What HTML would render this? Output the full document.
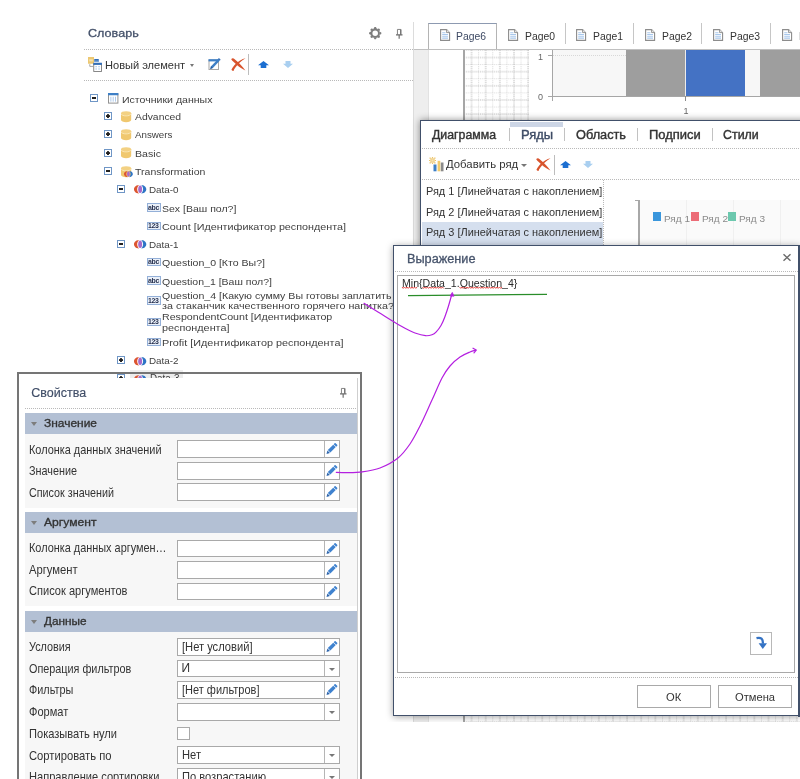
<!DOCTYPE html>
<html lang="ru"><head><meta charset="utf-8"><title>Словарь</title>
<style>
*{box-sizing:border-box;margin:0;padding:0}
html,body{width:800px;height:779px;overflow:hidden;background:#fff}
#w{position:absolute;left:0;top:0;width:800px;height:779px;will-change:transform;background:#fff}
body{position:relative;font-family:"Liberation Sans",Arial,sans-serif;font-size:11px;color:#333}
.t{position:absolute;white-space:nowrap;line-height:1;transform-origin:0 50%;color:#333}
.b{position:absolute}
svg{position:absolute;overflow:visible}
.dot{position:absolute;height:1px;background-image:linear-gradient(90deg,#b9b9b9 1px,transparent 1px);background-size:2px 1px}
.vdot{position:absolute;width:1px;background-image:linear-gradient(180deg,#b9b9b9 1px,transparent 1px);background-size:1px 2px}
.pm{position:absolute;width:8.200px;height:8.200px;border:1px solid #6f96c6;background:#fff}
.pm:before{content:"";position:absolute;left:1.200px;top:2.400px;width:3.900px;height:1.400px;background:#222}
.pm.p:before{left:1px;top:2.100px;width:4.200px;height:2px;border-radius:.6px;background:#222}
.pm.p:after{content:"";position:absolute;left:2.100px;top:1px;width:2px;height:4.200px;border-radius:.6px;background:#222}
.gh{position:absolute;left:25px;width:332.5px;height:20.5px;background:#b3c0d4}
.gh i{position:absolute;left:6.200px;top:8.600px;width:0;height:0;border-left:3.400px solid transparent;border-right:3.400px solid transparent;border-top:4.200px solid #7d7d7d}
.ra{position:absolute;left:25px;width:332.5px;background:#f7f7f7}
.in{position:absolute;left:176.800px;width:163px;height:17.5px;border:1px solid #a9a9a9;background:#fff}
.in:after{content:"";position:absolute;right:14.300px;top:0;bottom:0;width:1px;background:#b5b5b5}
.in.dd:before{content:"";position:absolute;right:4px;top:7px;border-left:3px solid transparent;border-right:3px solid transparent;border-top:3px solid #777}
.btn{position:absolute;border:1px solid #a9a9a9;background:#fff}
</style></head><body><div id="w">
<!-- dictionary -->
<span class="t" style="left:88.00px;top:28.21px;font-size:11.8px;color:#44516a;transform:scaleX(1.0682);-webkit-text-stroke:.3px #44516a;">Словарь</span>
<svg style="left:368.800px;top:27.300px" width="12.400" height="12.400" viewBox="-6.200 -6.200 12.400 12.400"><circle r="3.650" fill="none" stroke="#7d7d7d" stroke-width="1.750"/><g fill="#7d7d7d"><path d="M-1.800 -4.100L-.7 -6.100h1.400L1.800 -4.100z" transform="rotate(0)"/><path d="M-1.800 -4.100L-.7 -6.100h1.400L1.800 -4.100z" transform="rotate(45)"/><path d="M-1.800 -4.100L-.7 -6.100h1.400L1.800 -4.100z" transform="rotate(90)"/><path d="M-1.800 -4.100L-.7 -6.100h1.400L1.800 -4.100z" transform="rotate(135)"/><path d="M-1.800 -4.100L-.7 -6.100h1.400L1.800 -4.100z" transform="rotate(180)"/><path d="M-1.800 -4.100L-.7 -6.100h1.400L1.800 -4.100z" transform="rotate(225)"/><path d="M-1.800 -4.100L-.7 -6.100h1.400L1.800 -4.100z" transform="rotate(270)"/><path d="M-1.800 -4.100L-.7 -6.100h1.400L1.800 -4.100z" transform="rotate(315)"/></g></svg>
<svg style="left:396.250px;top:29px" width="6.500" height="9.700" viewBox="0 0 6.500 9.700"><path d="M1.450 5.600V.45h3.400V5.600" fill="none" stroke="#777" stroke-width=".9"/><rect x="4" y=".45" width="1.300" height="5.200" fill="#777"/><path d="M0 5.950h6.500M3.150 6.300v3.400" fill="none" stroke="#6a6a6a" stroke-width="1.150"/></svg>
<div class="dot" style="left:84px;top:49px;width:329px"></div>
<svg style="left:88px;top:56px" width="16" height="16" viewBox="0 0 16 16"><rect x="0" y="1" width="6" height="6.750" fill="#ecc873"/><path d="M1.200 3.200h3.600v2.200H1.200z" fill="#f5e1ad"/><rect x="6.250" y="3" width="4.500" height="2.750" fill="#2f6db9"/><rect x="6.250" y="4.600" width="4.500" height="1.150" fill="#7fa7d8"/><path d="M1.800 8.200v2.200h3.400" fill="none" stroke="#a5a5a5" stroke-width="1"/><rect x="5.750" y="8" width="7.700" height="7.500" fill="#fff" stroke="#7c7c7c" stroke-width=".9"/><rect x="5.250" y="6.750" width="8.700" height="2.100" fill="#2f6db9"/><path d="M7.300 10.200h1.700v1h-1.700zM10.200 10.200h1.700v1h-1.700zM7.300 12.400h1.700v1h-1.700zM10.200 12.400h1.700v1h-1.700z" fill="#a9c7eb"/></svg>
<span class="t" style="left:105.25px;top:59.82px;font-size:11.2px;transform:scaleX(0.9888);">Новый элемент</span>
<div class="b" style="left:189.800px;top:63.500px;width:0;height:0;border-left:2.900px solid transparent;border-right:2.900px solid transparent;border-top:3px solid #777"></div>
<svg style="left:207.500px;top:58px" width="13" height="13" viewBox="0 0 13 13"><rect x="1" y="2" width="9.500" height="9.500" fill="#fff" stroke="#a8a8a8" stroke-width="1"/><rect x=".5" y="1.200" width="10.500" height="2.200" fill="#3d7fc6"/><path d="M2.200 10.900l.9-2.700 7-7.300 1.800 1.700-7 7.300z" fill="#3d7fc6"/><path d="M2.200 10.900l.9-2.700 1.800 1.700z" fill="#2a5c9c"/><path d="M10.100.9l.8-.8 1.800 1.700-.8.800z" fill="#2f6ab5"/></svg>
<svg style="left:231px;top:58px" width="15" height="13" viewBox="0 0 15 13"><path d="M.2 1.300C.9.100 2.300 0 3.400.9 7.300 4 11.200 8 14.400 12.500 11.200 10.900 8.600 9.200 6.200 7.200 3.700 5.100 1.500 3.100.2 1.300z" fill="#d8542d"/><path d="M14.500.200C10.400 2.600 6.900 6 4.200 9.800 3.400 10.900 2.900 11.900 2.500 12.900 1.500 13 .6 12.500.5 11.500 1.900 8.300 5 4.900 9.100 2.400 10.900 1.300 12.800.500 14.500.200z" fill="#d8542d"/></svg>
<div class="b" style="left:248px;top:54px;width:1px;height:21px;background:#bdbdbd"></div>
<svg style="left:257.500px;top:61px" width="11" height="7" viewBox="0 0 11 7"><path d="M5.500 0L11 4.300H8.300V7H2.700V4.300H0z" fill="#1c6fd1"/></svg>
<svg style="left:282.500px;top:61px" width="10" height="7" viewBox="0 0 10 7"><path d="M5 7L10 2.700H7.500V0H2.500V2.700H0z" fill="#a9cff0"/></svg>
<div class="dot" style="left:84px;top:80px;width:329px"></div>
<div class="pm" style="left:90px;top:94px"></div>
<svg style="left:107.800px;top:93.100px" width="10.400" height="10.600" viewBox="0 0 10.800 10.800" preserveAspectRatio="none"><rect x=".5" y="1" width="9.800" height="9.300" fill="#fff" stroke="#8f8f8f"/><rect x="0" y="0" width="10.800" height="2.300" fill="#3d7fc6"/><path d="M3 3.800v5M5.400 3.800v5M7.800 3.800v5" stroke="#a9c6e8" stroke-width="1"/></svg>
<span class="t" style="left:122.15px;top:94.60px;font-size:9.8px;color:#404040;transform:scaleX(1.0778);">Источники данных</span>
<div class="pm p" style="left:104px;top:112px"></div>
<svg style="left:120.9px;top:110.6px" width="10.200" height="11.200" viewBox="0 0 10.600 10.800" preserveAspectRatio="none"><path d="M0 2.200v6.600c0 1.100 2.400 2 5.300 2s5.300-.9 5.300-2V2.200z" fill="#f0c86f"/><ellipse cx="5.300" cy="2.200" rx="5.300" ry="2" fill="#f3d183"/><path d="M.2 3c.6 1 2.600 1.700 5.100 1.700S9.800 4 10.400 3" fill="none" stroke="#fbecc4" stroke-width=".8"/></svg>
<span class="t" style="left:134.90px;top:112.22px;font-size:9.9px;color:#404040;transform:scaleX(1.0504);">Advanced</span>
<div class="pm p" style="left:104px;top:130px"></div>
<svg style="left:120.9px;top:128.6px" width="10.200" height="11.200" viewBox="0 0 10.600 10.800" preserveAspectRatio="none"><path d="M0 2.200v6.600c0 1.100 2.400 2 5.300 2s5.300-.9 5.300-2V2.200z" fill="#f0c86f"/><ellipse cx="5.300" cy="2.200" rx="5.300" ry="2" fill="#f3d183"/><path d="M.2 3c.6 1 2.600 1.700 5.100 1.700S9.800 4 10.400 3" fill="none" stroke="#fbecc4" stroke-width=".8"/></svg>
<span class="t" style="left:134.90px;top:130.22px;font-size:9.9px;color:#404040;transform:scaleX(0.9879);">Answers</span>
<div class="pm p" style="left:104px;top:148.5px"></div>
<svg style="left:120.9px;top:147.1px" width="10.200" height="11.200" viewBox="0 0 10.600 10.800" preserveAspectRatio="none"><path d="M0 2.200v6.600c0 1.100 2.400 2 5.300 2s5.300-.9 5.300-2V2.200z" fill="#f0c86f"/><ellipse cx="5.300" cy="2.200" rx="5.300" ry="2" fill="#f3d183"/><path d="M.2 3c.6 1 2.600 1.700 5.100 1.700S9.800 4 10.400 3" fill="none" stroke="#fbecc4" stroke-width=".8"/></svg>
<span class="t" style="left:134.90px;top:148.72px;font-size:9.9px;color:#404040;transform:scaleX(1.0740);">Basic</span>
<div class="pm" style="left:104px;top:167px"></div>
<svg style="left:120.9px;top:165.6px" width="10.200" height="11.200" viewBox="0 0 10.600 10.800" preserveAspectRatio="none"><path d="M0 2.200v6.600c0 1.100 2.400 2 5.300 2s5.300-.9 5.300-2V2.200z" fill="#f0c86f"/><ellipse cx="5.300" cy="2.200" rx="5.300" ry="2" fill="#f3d183"/><path d="M.2 3c.6 1 2.600 1.700 5.100 1.700S9.800 4 10.400 3" fill="none" stroke="#fbecc4" stroke-width=".8"/></svg>
<span class="t" style="left:134.90px;top:167.22px;font-size:9.9px;color:#404040;transform:scaleX(1.0649);">Transformation</span>
<svg style="left:124.4px;top:171px" width="8.86" height="6.19" viewBox="0 0 12.300 8.600"><path d="M5.100 0C.9.300 0 3 0 4.300S.9 8.300 5.100 8.600C3.600 7.200 3.200 5.600 3.200 4.300S3.600 1.400 5.100 0z" fill="#dc5530"/><ellipse cx="6.150" cy="4.300" rx="1.950" ry="3.800" fill="#a66acb"/><path d="M7.200 0C11.400.300 12.300 3 12.300 4.300S11.400 8.300 7.200 8.600C8.700 7.200 9.100 5.600 9.100 4.300S8.700 1.400 7.200 0z" fill="#2d74c6"/></svg>
<div class="pm" style="left:117px;top:185px"></div>
<svg style="left:133.9px;top:185.4px" width="12.30" height="8.60" viewBox="0 0 12.300 8.600"><path d="M5.100 0C.9.300 0 3 0 4.300S.9 8.300 5.100 8.600C3.600 7.200 3.200 5.600 3.200 4.300S3.600 1.400 5.100 0z" fill="#dc5530"/><ellipse cx="6.150" cy="4.300" rx="1.950" ry="3.800" fill="#a66acb"/><path d="M7.200 0C11.400.300 12.300 3 12.300 4.300S11.400 8.300 7.200 8.600C8.700 7.200 9.100 5.600 9.100 4.300S8.700 1.400 7.200 0z" fill="#2d74c6"/></svg>
<span class="t" style="left:149.15px;top:185.40px;font-size:9.8px;color:#404040;transform:scaleX(1.0064);">Data-0</span>
<div class="b" style="left:147px;top:203.10px;width:13.800px;height:8.500px;border:1px solid #94b0d8;background:#eaf0f9"></div><span class="t" style="left:148.20px;top:203.60px;font-size:7.500px;font-weight:bold;color:#27314f;letter-spacing:-0.300px;transform:scaleX(.92)">abc</span>
<span class="t" style="left:161.90px;top:203.70px;font-size:9.8px;color:#404040;transform:scaleX(1.0731);">Sex [Ваш пол?]</span>
<div class="b" style="left:147px;top:221.60px;width:13.800px;height:8.500px;border:1px solid #94b0d8;background:#eaf0f9"></div><span class="t" style="left:148.20px;top:222.10px;font-size:7.500px;font-weight:bold;color:#27314f;letter-spacing:-0.300px;transform:scaleX(.92)">123</span>
<span class="t" style="left:161.90px;top:222.40px;font-size:9.8px;color:#404040;transform:scaleX(1.0982);">Count [Идентификатор респондента]</span>
<div class="pm" style="left:117px;top:239.8px"></div>
<svg style="left:133.9px;top:240.20000000000002px" width="12.30" height="8.60" viewBox="0 0 12.300 8.600"><path d="M5.100 0C.9.300 0 3 0 4.300S.9 8.300 5.100 8.600C3.600 7.200 3.200 5.600 3.200 4.300S3.600 1.400 5.100 0z" fill="#dc5530"/><ellipse cx="6.150" cy="4.300" rx="1.950" ry="3.800" fill="#a66acb"/><path d="M7.200 0C11.400.300 12.300 3 12.300 4.300S11.400 8.300 7.200 8.600C8.700 7.200 9.100 5.600 9.100 4.300S8.700 1.400 7.200 0z" fill="#2d74c6"/></svg>
<span class="t" style="left:149.15px;top:240.20px;font-size:9.8px;color:#404040;transform:scaleX(1.0064);">Data-1</span>
<div class="b" style="left:147px;top:257.60px;width:13.800px;height:8.500px;border:1px solid #94b0d8;background:#eaf0f9"></div><span class="t" style="left:148.20px;top:258.10px;font-size:7.500px;font-weight:bold;color:#27314f;letter-spacing:-0.300px;transform:scaleX(.92)">abc</span>
<span class="t" style="left:161.90px;top:258.40px;font-size:9.8px;color:#404040;transform:scaleX(1.0777);">Question_0 [Кто Вы?]</span>
<div class="b" style="left:147px;top:276.10px;width:13.800px;height:8.500px;border:1px solid #94b0d8;background:#eaf0f9"></div><span class="t" style="left:148.20px;top:276.60px;font-size:7.500px;font-weight:bold;color:#27314f;letter-spacing:-0.300px;transform:scaleX(.92)">abc</span>
<span class="t" style="left:161.90px;top:276.60px;font-size:9.8px;color:#404040;transform:scaleX(1.0725);">Question_1 [Ваш пол?]</span>
<div class="b" style="left:147px;top:296.10px;width:13.800px;height:8.500px;border:1px solid #94b0d8;background:#eaf0f9"></div><span class="t" style="left:148.20px;top:296.60px;font-size:7.500px;font-weight:bold;color:#27314f;letter-spacing:-0.300px;transform:scaleX(.92)">123</span>
<span class="t" style="left:161.90px;top:291.73px;font-size:9.3px;color:#404040;transform:scaleX(1.1384);">Question_4 [Какую сумму Вы готовы заплатить</span>
<span class="t" style="left:161.90px;top:301.73px;font-size:9.3px;color:#404040;transform:scaleX(1.1562);">за стаканчик качественного горячего напитка?</span>
<div class="b" style="left:147px;top:317.60px;width:13.800px;height:8.500px;border:1px solid #94b0d8;background:#eaf0f9"></div><span class="t" style="left:148.20px;top:318.10px;font-size:7.500px;font-weight:bold;color:#27314f;letter-spacing:-0.300px;transform:scaleX(.92)">123</span>
<span class="t" style="left:161.90px;top:313.23px;font-size:9.3px;color:#404040;transform:scaleX(1.1461);">RespondentCount [Идентификатор</span>
<span class="t" style="left:161.90px;top:323.93px;font-size:9.3px;color:#404040;transform:scaleX(1.1642);">респондента]</span>
<div class="b" style="left:147px;top:337.90px;width:13.800px;height:8.500px;border:1px solid #94b0d8;background:#eaf0f9"></div><span class="t" style="left:148.20px;top:338.40px;font-size:7.500px;font-weight:bold;color:#27314f;letter-spacing:-0.300px;transform:scaleX(.92)">123</span>
<span class="t" style="left:161.90px;top:338.83px;font-size:9.3px;color:#404040;transform:scaleX(1.1643);">Profit [Идентификатор респондента]</span>
<div class="pm p" style="left:117px;top:356.3px"></div>
<svg style="left:133.9px;top:356.7px" width="12.30" height="8.60" viewBox="0 0 12.300 8.600"><path d="M5.100 0C.9.300 0 3 0 4.300S.9 8.300 5.100 8.600C3.600 7.200 3.200 5.600 3.200 4.300S3.600 1.400 5.100 0z" fill="#dc5530"/><ellipse cx="6.150" cy="4.300" rx="1.950" ry="3.800" fill="#a66acb"/><path d="M7.200 0C11.400.300 12.300 3 12.300 4.300S11.400 8.300 7.200 8.600C8.700 7.200 9.100 5.600 9.100 4.300S8.700 1.400 7.200 0z" fill="#2d74c6"/></svg>
<span class="t" style="left:149.15px;top:355.70px;font-size:9.8px;color:#404040;transform:scaleX(1.0064);">Data-2</span>
<div class="b" style="left:130px;top:370px;width:52.500px;height:14px;background:#efefef"></div>
<div class="pm p" style="left:117px;top:374.3px"></div>
<svg style="left:133.9px;top:374.7px" width="12.30" height="8.60" viewBox="0 0 12.300 8.600"><path d="M5.100 0C.9.300 0 3 0 4.300S.9 8.300 5.100 8.600C3.600 7.200 3.200 5.600 3.200 4.300S3.600 1.400 5.100 0z" fill="#dc5530"/><ellipse cx="6.150" cy="4.300" rx="1.950" ry="3.800" fill="#a66acb"/><path d="M7.200 0C11.400.300 12.300 3 12.300 4.300S11.400 8.300 7.200 8.600C8.700 7.200 9.100 5.600 9.100 4.300S8.700 1.400 7.200 0z" fill="#2d74c6"/></svg>
<span class="t" style="left:149.15px;top:374.70px;font-size:9.8px;color:#404040;transform:scaleX(1.0064);">Data-3</span>
<!-- designer backdrop -->
<div class="b" style="left:413px;top:22px;width:1px;height:700px;background:#dcdcdc"></div>
<div class="b" style="left:414px;top:49.500px;width:14px;height:672.500px;background:#eeeeee"></div>
<svg style="left:464px;top:49.500px" width="336" height="672.500" viewBox="0 0 336 672.500"><defs><pattern id="gr" width="14.140" height="14.140" patternUnits="userSpaceOnUse"><path d="M0 .5H14.140M0 7.570H14.140" stroke="#c4c4c4" stroke-width="1" stroke-dasharray="1 .8" opacity=".55"/><path d="M0 7.570H14.140" stroke="#a8a8a8" stroke-width="1" stroke-dasharray="1 .8" opacity=".5"/><path d="M.5 0V14.140" stroke="#c4c4c4" stroke-width="1" stroke-dasharray="1 .8" opacity=".55"/><path d="M7.570 0V14.140" stroke="#a8a8a8" stroke-width="1" stroke-dasharray="1 .8" opacity=".8"/></pattern></defs><rect width="336" height="672.500" fill="#fff"/><rect x="0" y="0" width="336" height="672.500" fill="url(#gr)"/></svg>
<div class="b" style="left:463.400px;top:50px;width:1.200px;height:672px;background:#a6a6a6"></div>
<div class="b" style="left:428px;top:49.500px;width:1px;height:672.500px;background:#e2e2e2"></div>
<div class="b" style="left:529px;top:49.500px;width:271px;height:70.500px;background:#fff"></div>
<div class="b" style="left:553px;top:49.500px;width:247px;height:46.500px;background:#f7f7f7"></div>
<div class="dot" style="left:553px;top:55px;width:73px;opacity:.5"></div>
<div class="b" style="left:626.300px;top:49.500px;width:58.700px;height:46.700px;background:#9e9e9e"></div>
<div class="b" style="left:685px;top:49.500px;width:1.200px;height:46.700px;background:#ececec"></div>
<div class="b" style="left:686.200px;top:49.500px;width:58.800px;height:46.700px;background:#4472c4"></div>
<div class="b" style="left:760px;top:49.500px;width:40px;height:46.700px;background:#9e9e9e"></div>
<div class="b" style="left:552px;top:49.500px;width:1.200px;height:51px;background:#a6a6a6"></div>
<div class="b" style="left:548px;top:55px;width:4px;height:1px;background:#a6a6a6"></div>
<div class="b" style="left:548px;top:96.300px;width:252px;height:1.100px;background:#a6a6a6"></div>
<div class="b" style="left:685.200px;top:96px;width:1px;height:4.500px;background:#8a8a8a"></div>
<span class="t" style="left:538.00px;top:52.58px;font-size:9px;color:#666;">1</span>
<span class="t" style="left:538.00px;top:93.38px;font-size:9px;color:#666;">0</span>
<span class="t" style="left:683.50px;top:107.38px;font-size:9px;color:#666;">1</span>
<!-- page tabs -->
<div class="b" style="left:414px;top:0;width:386px;height:49px;background:#fff"></div>
<div class="b" style="left:428px;top:22.500px;width:69px;height:26.500px;border:1px solid #b4b4b4;border-top-color:#8d9ab1;border-bottom:0;background:#fff"></div>
<div class="b" style="left:413.500px;top:48.900px;width:386.500px;height:1.300px;background:#c0c0c0"></div>
<svg style="left:439.8px;top:28.800px" width="10.200" height="12" viewBox="0 0 10.200 12"><path d="M.6.600h6l3 3v7.800h-9z" fill="#fff" stroke="#8c8c8c" stroke-width="1.100"/><path d="M6.600.600v3h3" fill="#e8e8e8" stroke="#8c8c8c" stroke-width=".9"/><path d="M2.200 3.700h3.300M2.200 5.500h5.800M2.200 7.300h5.800M2.200 9.100h5.800" stroke="#a9c8ec" stroke-width="1.100"/></svg>
<span class="t" style="left:455.50px;top:30.63px;font-size:11.3px;color:#3e4a64;transform:scaleX(0.9182);">Page6</span>
<svg style="left:508.2px;top:28.800px" width="10.200" height="12" viewBox="0 0 10.200 12"><path d="M.6.600h6l3 3v7.800h-9z" fill="#fff" stroke="#8c8c8c" stroke-width="1.100"/><path d="M6.600.600v3h3" fill="#e8e8e8" stroke="#8c8c8c" stroke-width=".9"/><path d="M2.200 3.700h3.300M2.200 5.500h5.800M2.200 7.300h5.800M2.200 9.100h5.800" stroke="#a9c8ec" stroke-width="1.100"/></svg>
<span class="t" style="left:525.00px;top:30.63px;font-size:11.3px;color:#333;transform:scaleX(0.9182);">Page0</span>
<svg style="left:576.2px;top:28.800px" width="10.200" height="12" viewBox="0 0 10.200 12"><path d="M.6.600h6l3 3v7.800h-9z" fill="#fff" stroke="#8c8c8c" stroke-width="1.100"/><path d="M6.600.600v3h3" fill="#e8e8e8" stroke="#8c8c8c" stroke-width=".9"/><path d="M2.200 3.700h3.300M2.200 5.500h5.800M2.200 7.300h5.800M2.200 9.100h5.800" stroke="#a9c8ec" stroke-width="1.100"/></svg>
<span class="t" style="left:593.20px;top:30.63px;font-size:11.3px;color:#333;transform:scaleX(0.9182);">Page1</span>
<svg style="left:644.7px;top:28.800px" width="10.200" height="12" viewBox="0 0 10.200 12"><path d="M.6.600h6l3 3v7.800h-9z" fill="#fff" stroke="#8c8c8c" stroke-width="1.100"/><path d="M6.600.600v3h3" fill="#e8e8e8" stroke="#8c8c8c" stroke-width=".9"/><path d="M2.200 3.700h3.300M2.200 5.500h5.800M2.200 7.300h5.800M2.200 9.100h5.800" stroke="#a9c8ec" stroke-width="1.100"/></svg>
<span class="t" style="left:662.00px;top:30.63px;font-size:11.3px;color:#333;transform:scaleX(0.9182);">Page2</span>
<svg style="left:713.2px;top:28.800px" width="10.200" height="12" viewBox="0 0 10.200 12"><path d="M.6.600h6l3 3v7.800h-9z" fill="#fff" stroke="#8c8c8c" stroke-width="1.100"/><path d="M6.600.600v3h3" fill="#e8e8e8" stroke="#8c8c8c" stroke-width=".9"/><path d="M2.200 3.700h3.300M2.200 5.500h5.800M2.200 7.300h5.800M2.200 9.100h5.800" stroke="#a9c8ec" stroke-width="1.100"/></svg>
<span class="t" style="left:730.00px;top:30.63px;font-size:11.3px;color:#333;transform:scaleX(0.9182);">Page3</span>
<svg style="left:781.9px;top:28.800px" width="10.200" height="12" viewBox="0 0 10.200 12"><path d="M.6.600h6l3 3v7.800h-9z" fill="#fff" stroke="#8c8c8c" stroke-width="1.100"/><path d="M6.600.600v3h3" fill="#e8e8e8" stroke="#8c8c8c" stroke-width=".9"/><path d="M2.200 3.700h3.300M2.200 5.500h5.800M2.200 7.300h5.800M2.200 9.100h5.800" stroke="#a9c8ec" stroke-width="1.100"/></svg>
<span class="t" style="left:799.00px;top:30.63px;font-size:11.3px;color:#333;transform:scaleX(0.9182);">Page4</span>
<div class="b" style="left:565.3px;top:23px;width:1px;height:21px;background:#c6c6c6"></div>
<div class="b" style="left:633px;top:23px;width:1px;height:21px;background:#c6c6c6"></div>
<div class="b" style="left:701.2px;top:23px;width:1px;height:21px;background:#c6c6c6"></div>
<div class="b" style="left:770.3px;top:23px;width:1px;height:21px;background:#c6c6c6"></div>
<!-- chart editor -->
<div class="b" style="left:420px;top:119.500px;width:400px;height:140px;border:1.300px solid #41506a;background:#fff;box-shadow:0 0 7px rgba(0,0,0,.45)"></div>
<div class="b" style="left:510px;top:121.800px;width:53px;height:5px;background:#cdd6e6"></div>
<span class="t" style="left:432.00px;top:129.42px;font-size:12.5px;color:#333;transform:scaleX(0.9846);-webkit-text-stroke:.4px #333;">Диаграмма</span>
<span class="t" style="left:520.50px;top:129.22px;font-size:12.5px;color:#3e4c66;transform:scaleX(1.0328);-webkit-text-stroke:.4px #3e4c66;">Ряды</span>
<span class="t" style="left:576.00px;top:129.42px;font-size:12.5px;color:#333;transform:scaleX(1.0193);-webkit-text-stroke:.4px #333;">Область</span>
<span class="t" style="left:648.75px;top:129.42px;font-size:12.5px;color:#333;transform:scaleX(1.0363);-webkit-text-stroke:.4px #333;">Подписи</span>
<span class="t" style="left:723.00px;top:129.42px;font-size:12.5px;color:#333;transform:scaleX(0.9928);-webkit-text-stroke:.4px #333;">Стили</span>
<div class="b" style="left:508.5px;top:127.500px;width:1px;height:13px;background:#c2c2c2"></div>
<div class="b" style="left:564.3px;top:127.500px;width:1px;height:13px;background:#c2c2c2"></div>
<div class="b" style="left:637.3px;top:127.500px;width:1px;height:13px;background:#c2c2c2"></div>
<div class="b" style="left:712.3px;top:127.500px;width:1px;height:13px;background:#c2c2c2"></div>
<div class="dot" style="left:421.500px;top:148px;width:379px"></div>
<svg style="left:428.500px;top:156.500px" width="15" height="15" viewBox="0 0 15 15"><rect x="1.300" y="1.300" width="4.400" height="4.400" fill="#efcf86"/><path d="M.5.500h1.300v1.300H.5zM5.200.500h1.300v1.300H5.200zM.5 5.200h1.300v1.300H.5zM5.200 5.200h1.300v1.300H5.200zM2.900 0h1.200v1.200H2.900zM2.900 5.800h1.200V7H2.900zM0 2.900h1.200v1.200H0zM5.800 2.900H7v1.200H5.800z" fill="#ecc469"/><rect x="2.500" y="2.500" width="2" height="2" fill="#f6e3b3"/><rect x="4.500" y="7.500" width="3" height="6.800" fill="#3d7fc6"/><rect x="8.600" y="3.800" width="2.700" height="10.500" fill="#f1cb6e"/><rect x="11.800" y="5.500" width="2.700" height="8.800" fill="#8a8a8a"/></svg>
<span class="t" style="left:445.75px;top:159.01px;font-size:11.8px;transform:scaleX(0.9617);">Добавить ряд</span>
<div class="b" style="left:521.200px;top:163.700px;width:0;height:0;border-left:3.100px solid transparent;border-right:3.100px solid transparent;border-top:3.300px solid #777"></div>
<svg style="left:536px;top:157.500px" width="15" height="13" viewBox="0 0 15 13"><path d="M.2 1.300C.9.100 2.300 0 3.400.9 7.300 4 11.200 8 14.400 12.500 11.200 10.900 8.600 9.200 6.200 7.200 3.700 5.100 1.500 3.100.2 1.300z" fill="#d8542d"/><path d="M14.500.200C10.400 2.600 6.900 6 4.200 9.800 3.400 10.900 2.900 11.900 2.500 12.900 1.500 13 .6 12.500.5 11.500 1.900 8.300 5 4.900 9.100 2.400 10.900 1.300 12.800.500 14.500.200z" fill="#d8542d"/></svg>
<div class="b" style="left:554px;top:154.500px;width:1px;height:20px;background:#bdbdbd"></div>
<svg style="left:560px;top:160.500px" width="11" height="7" viewBox="0 0 11 7"><path d="M5.500 0L11 4.300H8.300V7H2.700V4.300H0z" fill="#1c6fd1"/></svg>
<svg style="left:582.500px;top:160.500px" width="10" height="7" viewBox="0 0 10 7"><path d="M5 7L10 2.700H7.500V0H2.500V2.700H0z" fill="#a9cff0"/></svg>
<div class="dot" style="left:421.500px;top:179px;width:379px"></div>
<div class="vdot" style="left:602.500px;top:180px;width:1px;height:66px"></div>
<div class="b" style="left:421.500px;top:222px;width:181px;height:23px;background:#d5dfee"></div>
<span class="t" style="left:426.00px;top:185.91px;font-size:11.8px;color:#333;transform:scaleX(0.9275);">Ряд 1 [Линейчатая с накоплением]</span>
<span class="t" style="left:426.00px;top:207.01px;font-size:11.8px;color:#333;transform:scaleX(0.9275);">Ряд 2 [Линейчатая с накоплением]</span>
<span class="t" style="left:426.00px;top:227.21px;font-size:11.8px;color:#333;transform:scaleX(0.9275);">Ряд 3 [Линейчатая с накоплением]</span>
<div class="b" style="left:640px;top:200px;width:160px;height:46px;background:#fafafa"></div>
<div class="b" style="left:686px;top:200px;width:1px;height:46px;background:#f0f0f0"></div>
<div class="b" style="left:733px;top:200px;width:1px;height:46px;background:#f0f0f0"></div>
<div class="b" style="left:780.3px;top:200px;width:1px;height:46px;background:#f0f0f0"></div>
<div class="b" style="left:638.300px;top:200px;width:1.300px;height:46px;background:#a8a8a8"></div>
<div class="b" style="left:635px;top:200px;width:4px;height:1px;background:#a8a8a8"></div>
<div class="b" style="left:652.5px;top:212px;width:8.600px;height:8.600px;background:#3996dc"></div>
<div class="b" style="left:690.5px;top:212px;width:8.600px;height:8.600px;background:#ec6c77"></div>
<div class="b" style="left:727.6px;top:212px;width:8.600px;height:8.600px;background:#6cc8ae"></div>
<span class="t" style="left:663.70px;top:213.97px;font-size:9.6px;color:#8a8a8a;transform:scaleX(1.0452);">Ряд 1</span>
<span class="t" style="left:702.00px;top:213.97px;font-size:9.6px;color:#8a8a8a;transform:scaleX(1.0452);">Ряд 2</span>
<span class="t" style="left:739.00px;top:213.97px;font-size:9.6px;color:#8a8a8a;transform:scaleX(1.0452);">Ряд 3</span>
<!-- properties -->
<div class="b" style="left:17px;top:372px;width:345px;height:420px;background:#757575"></div>
<div class="b" style="left:19px;top:374px;width:341px;height:420px;background:#fff"></div>
<div class="b" style="left:117px;top:374px;width:66px;height:4.300px;overflow:hidden"><div class="b" style="left:13px;top:0;width:52.500px;height:5px;background:#ececec"></div><div class="pm p" style="left:0;top:0.300px"></div><svg style="left:17px;top:0.5px" width="12.30" height="8.60" viewBox="0 0 12.300 8.600"><path d="M5.100 0C.9.300 0 3 0 4.300S.9 8.300 5.100 8.600C3.600 7.200 3.200 5.600 3.200 4.300S3.600 1.400 5.100 0z" fill="#dc5530"/><ellipse cx="6.150" cy="4.300" rx="1.950" ry="3.800" fill="#a66acb"/><path d="M7.200 0C11.400.300 12.300 3 12.300 4.300S11.400 8.300 7.200 8.600C8.700 7.200 9.100 5.600 9.100 4.300S8.700 1.400 7.200 0z" fill="#2d74c6"/></svg><span class="t" style="left:32.75px;top:-0.27px;font-size:10px;color:#3b3b3b;transform:scaleX(0.9862);">Data-3</span></div>
<span class="t" style="left:31.25px;top:386.82px;font-size:12.5px;color:#3e4c66;-webkit-text-stroke:.15px #44516a;">Свойства</span>
<svg style="left:340px;top:388px" width="6.500" height="9.700" viewBox="0 0 6.500 9.700"><path d="M1.450 5.600V.45h3.400V5.600" fill="none" stroke="#777" stroke-width=".9"/><rect x="4" y=".45" width="1.300" height="5.200" fill="#777"/><path d="M0 5.950h6.500M3.150 6.300v3.400" fill="none" stroke="#6a6a6a" stroke-width="1.150"/></svg>
<div class="dot" style="left:25px;top:408.300px;width:332px"></div>
<div class="gh" style="top:413px"><i></i></div>
<span class="t" style="left:44.00px;top:417.71px;font-size:11.8px;color:#333;transform:scaleX(1.0129);-webkit-text-stroke:.35px #333;">Значение</span>
<div class="ra" style="top:433.500px;height:74px"></div>
<span class="t" style="left:29.40px;top:444.63px;font-size:11.9px;color:#333;transform:scaleX(0.9175);">Колонка данных значений</span>
<div class="in" style="top:440px"></div>
<svg style="left:326.200px;top:443.00px" width="11.500" height="11.500" viewBox="0 0 12 12"><path d="M.5 11.500l1-3.600 2.600 2.600z" fill="#2f66ad"/><path d="M1.900 7.400l5.600-5.700 2.700 2.600-5.700 5.700z" fill="#3f82cf"/><path d="M8 1.200l1-1c.3-.3.7-.3 1 0l1.700 1.600c.3.300.3.700 0 1l-1 1z" fill="#3f82cf"/></svg>
<span class="t" style="left:29.40px;top:466.23px;font-size:11.9px;color:#333;transform:scaleX(0.9102);">Значение</span>
<div class="in" style="top:462px"></div>
<svg style="left:326.200px;top:465.00px" width="11.500" height="11.500" viewBox="0 0 12 12"><path d="M.5 11.500l1-3.600 2.600 2.600z" fill="#2f66ad"/><path d="M1.900 7.400l5.600-5.700 2.700 2.600-5.700 5.700z" fill="#3f82cf"/><path d="M8 1.200l1-1c.3-.3.7-.3 1 0l1.700 1.600c.3.300.3.700 0 1l-1 1z" fill="#3f82cf"/></svg>
<span class="t" style="left:29.40px;top:487.63px;font-size:11.9px;color:#333;transform:scaleX(0.9052);">Список значений</span>
<div class="in" style="top:483.2px"></div>
<svg style="left:326.200px;top:486.20px" width="11.500" height="11.500" viewBox="0 0 12 12"><path d="M.5 11.500l1-3.600 2.600 2.600z" fill="#2f66ad"/><path d="M1.900 7.400l5.600-5.700 2.700 2.600-5.700 5.700z" fill="#3f82cf"/><path d="M8 1.200l1-1c.3-.3.7-.3 1 0l1.700 1.600c.3.300.3.700 0 1l-1 1z" fill="#3f82cf"/></svg>
<div class="gh" style="top:512px"><i></i></div>
<span class="t" style="left:44.00px;top:516.71px;font-size:11.8px;color:#333;transform:scaleX(1.0274);-webkit-text-stroke:.35px #333;">Аргумент</span>
<div class="ra" style="top:532.500px;height:73.800px"></div>
<span class="t" style="left:29.40px;top:543.43px;font-size:11.9px;color:#333;transform:scaleX(0.9166);">Колонка данных аргумен…</span>
<div class="in" style="top:539.7px"></div>
<svg style="left:326.200px;top:542.70px" width="11.500" height="11.500" viewBox="0 0 12 12"><path d="M.5 11.500l1-3.600 2.600 2.600z" fill="#2f66ad"/><path d="M1.900 7.400l5.600-5.700 2.700 2.600-5.700 5.700z" fill="#3f82cf"/><path d="M8 1.200l1-1c.3-.3.7-.3 1 0l1.700 1.600c.3.300.3.700 0 1l-1 1z" fill="#3f82cf"/></svg>
<span class="t" style="left:29.40px;top:565.23px;font-size:11.9px;color:#333;transform:scaleX(0.9466);">Аргумент</span>
<div class="in" style="top:561.2px"></div>
<svg style="left:326.200px;top:564.20px" width="11.500" height="11.500" viewBox="0 0 12 12"><path d="M.5 11.500l1-3.600 2.600 2.600z" fill="#2f66ad"/><path d="M1.900 7.400l5.600-5.700 2.700 2.600-5.700 5.700z" fill="#3f82cf"/><path d="M8 1.200l1-1c.3-.3.7-.3 1 0l1.700 1.600c.3.300.3.700 0 1l-1 1z" fill="#3f82cf"/></svg>
<span class="t" style="left:29.40px;top:586.43px;font-size:11.9px;color:#333;transform:scaleX(0.9306);">Список аргументов</span>
<div class="in" style="top:582.5px"></div>
<svg style="left:326.200px;top:585.50px" width="11.500" height="11.500" viewBox="0 0 12 12"><path d="M.5 11.500l1-3.600 2.600 2.600z" fill="#2f66ad"/><path d="M1.900 7.400l5.600-5.700 2.700 2.600-5.700 5.700z" fill="#3f82cf"/><path d="M8 1.200l1-1c.3-.3.7-.3 1 0l1.700 1.600c.3.300.3.700 0 1l-1 1z" fill="#3f82cf"/></svg>
<div class="gh" style="top:611.2px"><i></i></div>
<span class="t" style="left:44.00px;top:615.91px;font-size:11.8px;color:#333;-webkit-text-stroke:.35px #333;">Данные</span>
<div class="ra" style="top:631.700px;height:160px"></div>
<span class="t" style="left:29.40px;top:642.23px;font-size:11.9px;color:#333;transform:scaleX(0.9116);">Условия</span>
<div class="in" style="top:638px"></div>
<svg style="left:326.200px;top:641.00px" width="11.500" height="11.500" viewBox="0 0 12 12"><path d="M.5 11.500l1-3.600 2.600 2.600z" fill="#2f66ad"/><path d="M1.900 7.400l5.600-5.700 2.700 2.600-5.700 5.700z" fill="#3f82cf"/><path d="M8 1.200l1-1c.3-.3.7-.3 1 0l1.700 1.600c.3.300.3.700 0 1l-1 1z" fill="#3f82cf"/></svg>
<span class="t" style="left:181.60px;top:641.53px;font-size:11.9px;color:#333;transform:scaleX(0.9373);">[Нет условий]</span>
<span class="t" style="left:29.40px;top:663.93px;font-size:11.9px;color:#333;transform:scaleX(0.9102);">Операция фильтров</span>
<div class="in dd" style="top:659.8px"></div>
<span class="t" style="left:181.60px;top:663.33px;font-size:11.9px;color:#333;">И</span>
<span class="t" style="left:29.40px;top:685.23px;font-size:11.9px;color:#333;transform:scaleX(0.9124);">Фильтры</span>
<div class="in" style="top:681.2px"></div>
<svg style="left:326.200px;top:684.20px" width="11.500" height="11.500" viewBox="0 0 12 12"><path d="M.5 11.500l1-3.600 2.600 2.600z" fill="#2f66ad"/><path d="M1.900 7.400l5.600-5.700 2.700 2.600-5.700 5.700z" fill="#3f82cf"/><path d="M8 1.200l1-1c.3-.3.7-.3 1 0l1.700 1.600c.3.300.3.700 0 1l-1 1z" fill="#3f82cf"/></svg>
<span class="t" style="left:181.60px;top:684.73px;font-size:11.9px;color:#333;transform:scaleX(0.9250);">[Нет фильтров]</span>
<span class="t" style="left:29.40px;top:707.23px;font-size:11.9px;color:#333;transform:scaleX(0.9290);">Формат</span>
<div class="in dd" style="top:703px"></div>
<span class="t" style="left:29.40px;top:729.43px;font-size:11.9px;color:#333;transform:scaleX(0.9320);">Показывать нули</span>
<div class="b" style="left:176.800px;top:727.200px;width:13.600px;height:12.600px;border:1px solid #a9a9a9;background:#fff"></div>
<span class="t" style="left:29.40px;top:750.73px;font-size:11.9px;color:#333;transform:scaleX(0.9439);">Сортировать по</span>
<div class="in dd" style="top:746.3px"></div>
<span class="t" style="left:181.60px;top:749.83px;font-size:11.9px;color:#333;transform:scaleX(0.9375);">Нет</span>
<span class="t" style="left:29.40px;top:771.53px;font-size:11.9px;color:#333;transform:scaleX(0.9314);">Направление сортировки</span>
<div class="in dd" style="top:768.2px"></div>
<span class="t" style="left:181.60px;top:771.73px;font-size:11.9px;color:#333;transform:scaleX(0.9353);">По возрастанию</span>
<div class="b" style="left:357.200px;top:378px;width:1px;height:402px;background:#cfcfcf"></div>
<!-- expression dialog -->
<div class="b" style="left:393.300px;top:245px;width:406.500px;height:470.700px;border:1.500px solid #41506a;background:#fff;box-shadow:0 1px 7px rgba(0,0,0,.36)"></div>
<div class="b" style="left:362px;top:722px;width:438px;height:57px;background:#fff"></div>
<span class="t" style="left:406.80px;top:252.82px;font-size:12.5px;color:#47546c;transform:scaleX(1.0165);-webkit-text-stroke:.3px #47546c;">Выражение</span>
<svg style="left:782.500px;top:254.300px" width="8" height="7" viewBox="0 0 8 7"><path d="M.5.300l7 6.400M7.500.300l-7 6.400" stroke="#6a6a6a" stroke-width="1.400" fill="none"/></svg>
<div class="dot" style="left:395px;top:271px;width:404px"></div>
<div class="b" style="left:397px;top:274.800px;width:398px;height:398px;border:1px solid #a9a9a9;background:#fff"></div>
<span class="t" style="left:401.60px;top:278.44px;font-size:10.7px;color:#2a2a2a;transform:scaleX(0.9907);">Min{Data_1.Question_4}</span>
<div class="dot" style="left:395px;top:677px;width:404px"></div>
<div class="btn" style="left:750px;top:632.300px;width:21.600px;height:22.300px;border-color:#b8b8b8"></div>
<svg style="left:754.500px;top:636px" width="13" height="15" viewBox="0 0 13 15"><path d="M1.500 2.200c4.500-1.200 6.800.8 6.300 5.500" fill="none" stroke="#3573c4" stroke-width="2.300"/><path d="M3.600 7.300h8.400l-4.200 5.700z" fill="#3573c4"/></svg>
<div class="btn" style="left:636.700px;top:685px;width:74px;height:22.500px"></div>
<div class="btn" style="left:718px;top:685px;width:73.600px;height:22.500px"></div>
<span class="t" style="left:666.10px;top:692.21px;font-size:11.8px;color:#333;transform:scaleX(0.9463);">ОК</span>
<span class="t" style="left:735.00px;top:692.21px;font-size:11.8px;color:#333;transform:scaleX(0.9450);">Отмена</span>
<div class="b" style="left:797.800px;top:245px;width:2.200px;height:471.500px;background:#41506a"></div>
<!-- annotations -->
<svg style="left:0;top:0" width="800" height="779" viewBox="0 0 800 779"><path d="M402.0 287.00L403.2 288.40L404.5 287.00L405.8 288.40L407.0 287.00L408.2 288.40L409.5 287.00L410.8 288.40L412.0 287.00L413.2 288.40L414.5 287.00L415.8 288.40L417.0 287.00M422.4 287.00L423.6 288.40L424.9 287.00L426.1 288.40L427.4 287.00L428.6 288.40L429.9 287.00L431.1 288.40L432.4 287.00L433.6 288.40L434.9 287.00L436.1 288.40L437.4 287.00L438.6 288.40L439.9 287.00L441.1 288.40L442.4 287.00L443.6 288.40M459.5 287.00L460.8 288.40L462.0 287.00L463.2 288.40L464.5 287.00L465.8 288.40L467.0 287.00L468.2 288.40L469.5 287.00L470.8 288.40L472.0 287.00L473.2 288.40L474.5 287.00L475.8 288.40L477.0 287.00L478.2 288.40L479.5 287.00L480.8 288.40L482.0 287.00L483.2 288.40L484.5 287.00L485.8 288.40L487.0 287.00L488.2 288.40L489.5 287.00L490.8 288.40L492.0 287.00L493.2 288.40L494.5 287.00L495.8 288.40L497.0 287.00L498.2 288.40L499.5 287.00L500.8 288.40L502.0 287.00" stroke="#e23a34" stroke-width=".9" fill="none"/><path d="M408 295.600L547 294.400" stroke="#2a8d2a" stroke-width="1.300" fill="none"/>
<g fill="none" stroke="#b41fe0" stroke-width="1.200" stroke-linecap="round" stroke-linejoin="round">
<path d="M364.0 303.3C366.3 304.8 373.2 309.1 378.0 312.0C382.8 314.9 388.0 318.3 392.5 321.0C397.0 323.7 401.2 326.3 405.0 328.3C408.8 330.3 411.6 331.8 415.0 333.0C418.4 334.2 422.7 335.4 425.5 335.7C428.3 336.0 430.2 335.4 432.0 334.8C433.8 334.2 434.5 333.8 436.0 332.2C437.5 330.6 439.5 328.1 441.0 325.5C442.5 322.9 443.8 319.8 445.0 316.5C446.2 313.2 447.4 309.7 448.5 306.0C449.6 302.3 451.3 296.2 451.9 294.3"/>
<path d="M450.300 295.700L452.300 292.400L453.800 295.900z" fill="#b41fe0" stroke-width=".8"/>
<path d="M336.3 472.3C338.2 472.4 344.1 472.6 348.0 472.6C351.9 472.6 354.7 473.0 360.0 472.2C365.3 471.4 373.7 470.4 380.0 468.0C386.3 465.6 393.0 462.0 398.0 458.0C403.0 454.0 406.3 449.3 410.0 444.0C413.7 438.7 416.3 433.3 420.0 426.0C423.7 418.7 428.3 408.0 432.0 400.0C435.7 392.0 439.0 383.7 442.0 378.0C445.0 372.3 447.0 369.5 450.0 366.0C453.0 362.5 456.7 359.3 460.0 357.0C463.3 354.7 467.4 353.1 470.0 352.0C472.6 350.9 474.8 350.5 475.8 350.2"/>
<path d="M473 348.200l3.200 1.900-2.200 2.700"/>
</g></svg>
</div></body></html>
